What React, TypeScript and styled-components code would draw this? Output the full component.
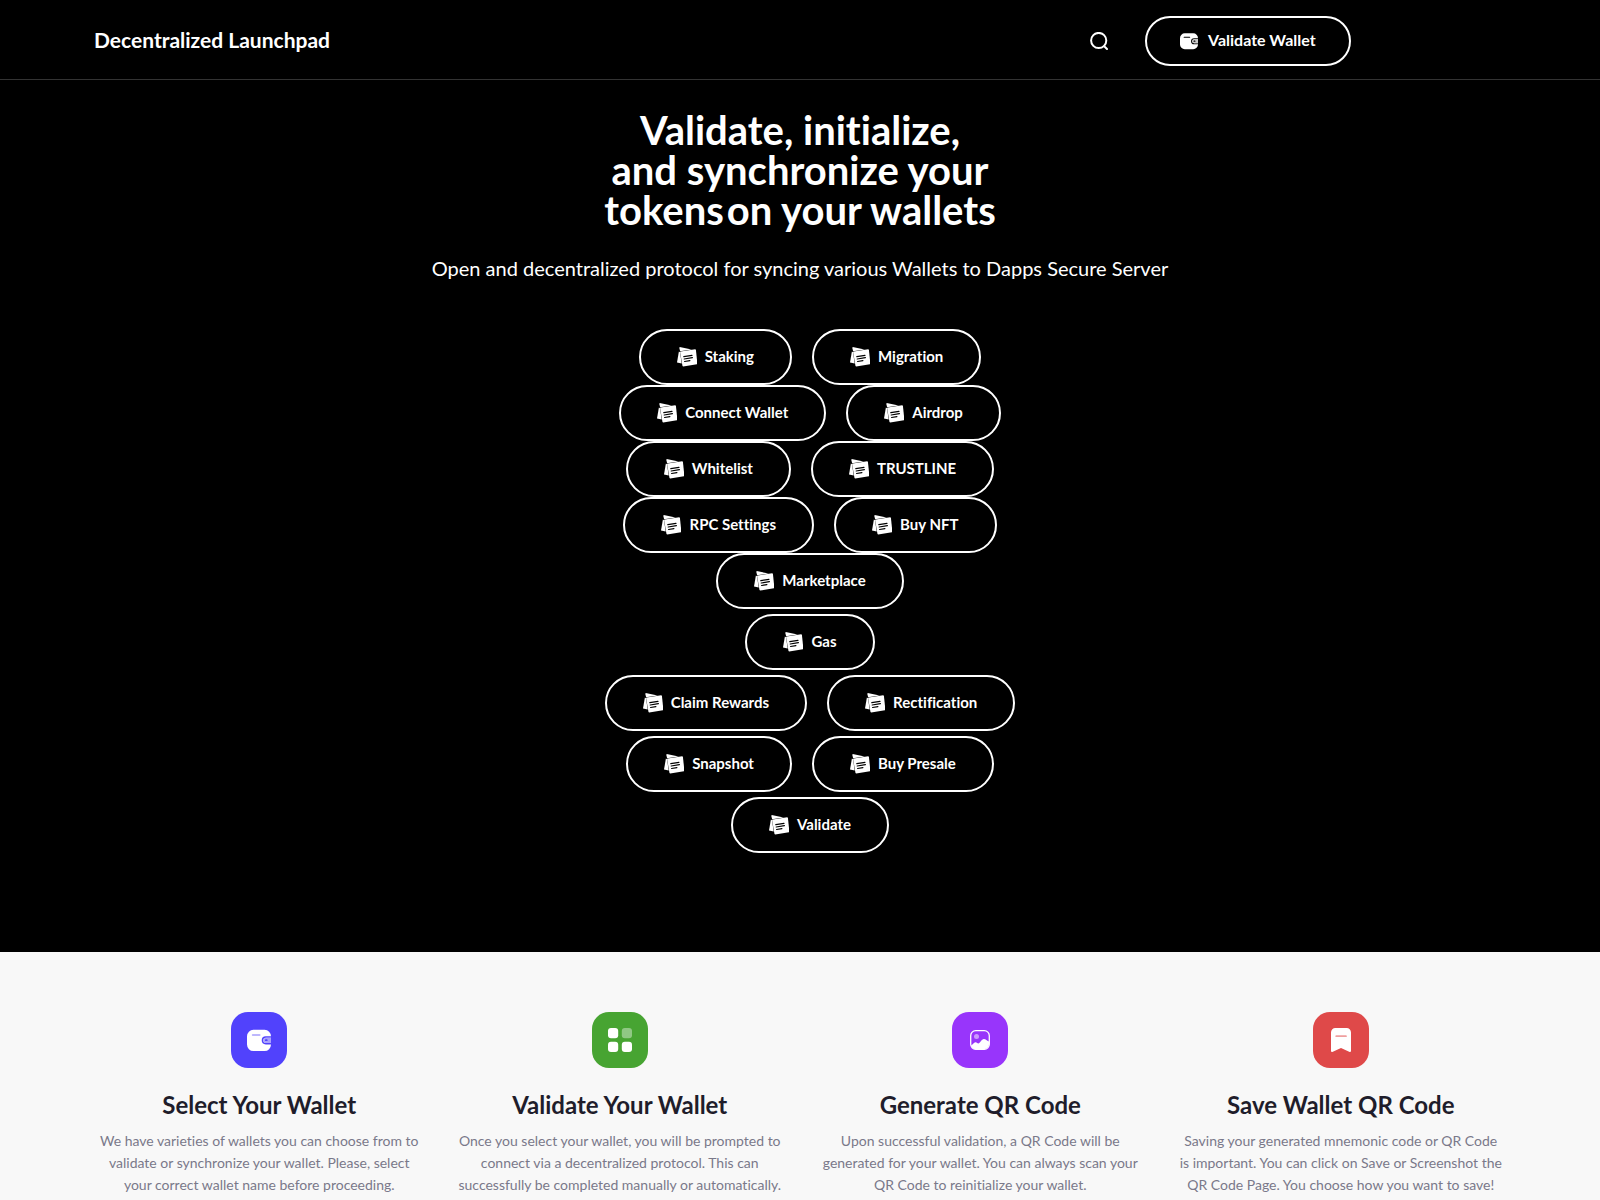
import React from "react";
import styled, { createGlobalStyle } from "styled-components";

const GlobalStyle = createGlobalStyle`
  *, *::before, *::after { box-sizing: border-box; }
  body {
    margin: 0;
    background: #f8f8f8;
    color: #1f1d2b;
    font-family: Lato, "Open Sans", sans-serif;
    font-size: 14px;
    line-height: 22px;
    font-variant-ligatures: none;
  }
  h1, h2, p { margin: 0; }
  svg { display: block; flex: none; }
`;

const Container = styled.div`
  width: 100%;
  max-width: 1442px;
  margin: 0 auto;
`;

const Header = styled.header`
  background: #000;
  border-bottom: 1px solid #333;
`;

const HeaderBar = styled(Container)`
  display: flex;
  align-items: center;
  justify-content: space-between;
  padding: 16px 15px 13px;
`;

const Brand = styled.a`
  padding-bottom: 2px;
  color: #fff;
  font-size: 21px;
  font-weight: 700;
  line-height: 24px;
  text-decoration: none;
`;

const Actions = styled.div`
  display: flex;
  align-items: center;
  gap: 37px;
  margin-right: 11%;
`;

const SearchButton = styled.button`
  padding: 0;
  border: 0;
  background: none;
  color: #fff;
  cursor: pointer;
`;

const PillLink = styled.a<{ $compact?: boolean }>`
  display: inline-flex;
  align-items: center;
  gap: ${(p) => (p.$compact ? 10 : 8)}px;
  height: ${(p) => (p.$compact ? 50 : 56)}px;
  padding: 0 ${(p) => (p.$compact ? 33 : 36)}px;
  border: 2px solid #fff;
  border-radius: 28px;
  color: #fff;
  font-size: ${(p) => (p.$compact ? 16 : 15)}px;
  font-weight: 700;
  line-height: 22px;
  text-decoration: none;
  white-space: nowrap;
`;

const PillLabel = styled.span`
  padding-bottom: 2px;
`;

const Hero = styled.section`
  padding: 30px 15px 99px;
  background: #000;
  color: #fff;
  text-align: center;
`;

const HeroTitle = styled.h1`
  font-size: 40px;
  font-weight: 700;
  line-height: 40px;
`;

const TitleTail = styled.span`
  margin-left: 3px;
`;

const HeroText = styled.p`
  margin-top: 23px;
  font-size: 20px;
  line-height: 30px;
`;

const PillRows = styled.div`
  margin-top: 46px;
  padding-left: 20px;
`;

const PillRow = styled.div<{ $spaced?: boolean }>`
  display: flex;
  flex-wrap: wrap;
  justify-content: center;
  column-gap: 20px;
  margin-top: ${(p) => (p.$spaced ? 5 : 0)}px;
`;

const Steps = styled.section`
  padding-top: 60px;
`;

const StepGrid = styled(Container)`
  display: grid;
  grid-template-columns: repeat(auto-fit, minmax(280px, 1fr));
`;

const Step = styled.article`
  display: flex;
  flex-direction: column;
  align-items: center;
  padding: 0 15px;
  text-align: center;
`;

const StepIcon = styled.div<{ $color: string }>`
  display: flex;
  align-items: center;
  justify-content: center;
  width: 56px;
  height: 56px;
  border-radius: 17px;
  background: ${(p) => p.$color};
`;

const StepTitle = styled.h2`
  margin-top: 20px;
  font-size: 24px;
  font-weight: 700;
  line-height: 34px;
`;

const StepText = styled.p`
  margin-top: 8px;
  color: #7a798a;
`;

function SearchIcon() {
  return (
    <svg width="18" height="18" viewBox="0 0 18 18" fill="none" stroke="currentColor" strokeWidth="2" strokeLinecap="round" aria-hidden="true">
      <circle cx="8.7" cy="8.5" r="7.6" />
      <path d="M14.2 14.2 17 17" />
    </svg>
  );
}

function WalletIcon({ size, back, accent, dash }: { size: number; back: string; accent: string; dash: string }) {
  return (
    <svg width={size} height={size} viewBox="0 0 24 24" aria-hidden="true">
      <path fill="#fff" d="M6.5 1.8h11A6.4 6.4 0 0 1 24 8.2v8.4a6.4 6.4 0 0 1-6.5 6.4h-11A6.4 6.4 0 0 1 0 16.6V8.2a6.4 6.4 0 0 1 6.5-6.4Z" />
      <path d="M5.600 7h7.200" stroke={dash} strokeWidth="1.600" strokeLinecap="round" />
      <path fill={back} d="M24 8.200h-5.200a4.100 4.100 0 0 0 0 8.200H24v-1.500h-5.100a2.600 2.600 0 0 1 0-5.200H24Z" />
      <path fill={accent} d="M24 9.700h-5.100a2.600 2.600 0 0 0 0 5.200H24Z" />
      <path d="M18.800 12.200h1" stroke={back} strokeWidth="1.700" strokeLinecap="round" />
    </svg>
  );
}

function NotesIcon() {
  return (
    <svg width="20" height="20" viewBox="0 0 20 20" aria-hidden="true">
      <path fill="#fff" d="M2.700 0 14.600 2.600 3.100 4.300 2.300.9Z" />
      <path fill="#fff" d="M1.900 4.600 3 5.200 4.700 16.400 0 15.600Z" />
      <path fill="#fff" d="M3.700 4.500 18.100 2.200l.8.500 1.500 13.900-.5.700-13.700 2.300-.7-.5L3.100 5.200Z" />
      <g stroke="#000" strokeWidth="1.200" strokeLinecap="round">
        <path d="m6.800 9.600 8.200-1.300" />
        <path d="m7.200 12 8.200-1.300" />
        <path d="m7.600 14.500 5.300-.9" />
      </g>
    </svg>
  );
}

function CategoryIcon() {
  return (
    <svg width="24" height="24" viewBox="0 0 24 24" fill="#fff" aria-hidden="true">
      <rect width="10.200" height="10.200" rx="3" />
      <rect x="13.800" width="10.200" height="10.200" rx="3" opacity=".4" />
      <rect y="13.800" width="10.200" height="10.200" rx="3" />
      <rect x="13.800" y="13.800" width="10.200" height="10.200" rx="3" />
    </svg>
  );
}

function PictureIcon() {
  return (
    <svg width="20" height="20" viewBox="0 0 20 20" aria-hidden="true">
      <rect x=".7" y=".7" width="18.600" height="18.600" rx="5" fill="none" stroke="#fff" strokeWidth="1.300" />
      <circle cx="6.500" cy="6.400" r="2.500" fill="#fff" opacity=".5" />
      <path fill="#fff" d="M1 15.500c1.700-.7 2.700-3.500 4.700-3.300 1.200.1 1.700 1.300 2.800 1.200 2-.2 2.900-4.300 5.400-4.300 2 0 2.800 1.800 5.100 2.300v2.900a5 5 0 0 1-5 5H6a5 5 0 0 1-5-3.800Z" />
    </svg>
  );
}

function BookmarkIcon() {
  return (
    <svg width="20" height="24" viewBox="0 0 20 24" aria-hidden="true">
      <path fill="#fff" d="M4.500 0h11A4.400 4.400 0 0 1 20 4.400v18.700c0 .8-.7 1.100-1.300.8L10 20l-8.700 3.900c-.6.300-1.300 0-1.300-.8V4.400A4.400 4.400 0 0 1 4.500 0Z" />
      <path d="M5.200 8.200h9.800" stroke="#ef9f9f" strokeWidth="1.700" strokeLinecap="round" />
    </svg>
  );
}

const pillRows: { labels: string[]; spaced?: boolean }[] = [
  { labels: ["Staking", "Migration"] },
  { labels: ["Connect Wallet", "Airdrop"] },
  { labels: ["Whitelist", "TRUSTLINE"] },
  { labels: ["RPC Settings", "Buy NFT"] },
  { labels: ["Marketplace"] },
  { labels: ["Gas"], spaced: true },
  { labels: ["Claim Rewards", "Rectification"], spaced: true },
  { labels: ["Snapshot", "Buy Presale"], spaced: true },
  { labels: ["Validate"], spaced: true },
];

const steps = [
  {
    color: "#5142fc",
    icon: <WalletIcon size={24} back="#5142fc" accent="#a8a0fd" dash="#a8a0fd" />,
    title: "Select Your Wallet",
    lines: ["We have varieties of wallets you can choose from to", "validate or synchronize your wallet. Please, select", "your correct wallet name before proceeding."],
  },
  {
    color: "#47a432",
    icon: <CategoryIcon />,
    title: "Validate Your Wallet",
    lines: ["Once you select your wallet, you will be prompted to", "connect via a decentralized protocol. This can", "successfully be completed manually or automatically."],
  },
  {
    color: "#9835fb",
    icon: <PictureIcon />,
    title: "Generate QR Code",
    lines: ["Upon successful validation, a QR Code will be", "generated for your wallet. You can always scan your", "QR Code to reinitialize your wallet."],
  },
  {
    color: "#df4949",
    icon: <BookmarkIcon />,
    title: "Save Wallet QR Code",
    lines: ["Saving your generated mnemonic code or QR Code", "is important. You can click on Save or Screenshot the", "QR Code Page. You choose how you want to save!"],
  },
];

export default function App() {
  return (
    <>
      <GlobalStyle />
      <Header>
        <HeaderBar>
          <Brand href="#">Decentralized Launchpad</Brand>
          <Actions>
            <SearchButton type="button" aria-label="Search">
              <SearchIcon />
            </SearchButton>
            <PillLink href="#validate" $compact>
              <WalletIcon size={18} back="#000" accent="#ccc" dash="#000" />
              <PillLabel>Validate Wallet</PillLabel>
            </PillLink>
          </Actions>
        </HeaderBar>
      </Header>
      <main>
        <Hero>
          <HeroTitle>
            Validate, initialize,
            <br />
            and synchronize your
            <br />
            tokens<TitleTail>on your wallets</TitleTail>
          </HeroTitle>
          <HeroText>Open and decentralized protocol for syncing various Wallets to Dapps Secure Server</HeroText>
          <PillRows>
            {pillRows.map((row) => (
              <PillRow key={row.labels[0]} $spaced={row.spaced}>
                {row.labels.map((label) => (
                  <PillLink key={label} href="#validate">
                    <NotesIcon />
                    <PillLabel>{label}</PillLabel>
                  </PillLink>
                ))}
              </PillRow>
            ))}
          </PillRows>
        </Hero>
        <Steps id="validate">
          <StepGrid>
            {steps.map((step) => (
              <Step key={step.title}>
                <StepIcon $color={step.color}>{step.icon}</StepIcon>
                <StepTitle>{step.title}</StepTitle>
                <StepText>
                  {step.lines.map((line, i) => (
                    <React.Fragment key={line}>
                      {i > 0 && <br />}
                      {line}
                    </React.Fragment>
                  ))}
                </StepText>
              </Step>
            ))}
          </StepGrid>
        </Steps>
      </main>
    </>
  );
}
